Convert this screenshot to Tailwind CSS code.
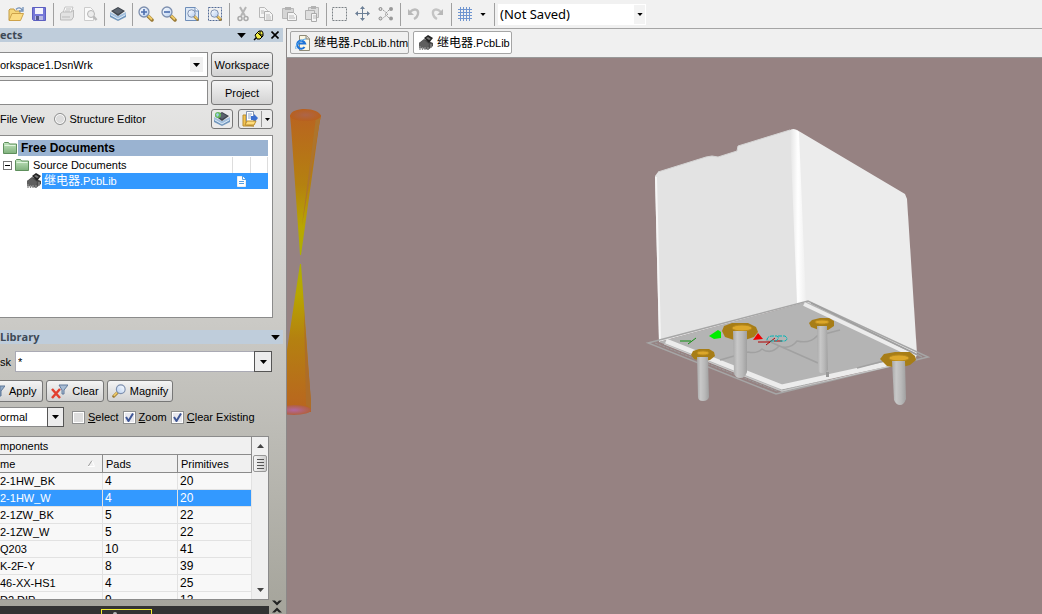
<!DOCTYPE html>
<html lang="en">
<head>
  <meta charset="UTF-8">
  <meta name="viewport" content="width=device-width, initial-scale=1.0">
  <title>PCB Library Editor</title>
  <script src="https://cdn.jsdelivr.net/npm/@tailwindcss/browser@4"></script>
</head>
<body class="h-screen flex flex-col overflow-hidden bg-[#f0f0f0] text-black text-[11px] leading-4 font-['Liberation_Sans','Noto_Sans_CJK_SC',sans-serif]">

  <!-- Shared icons -->
  <svg class="absolute size-0" aria-hidden="true">
    <defs>
      <linearGradient id="folder-fill" x1="0" y1="0" x2="0" y2="1"><stop offset="0" stop-color="#c3e6c0"/><stop offset="1" stop-color="#7fb07c"/></linearGradient>
      <linearGradient id="lens-fill" x1="0" y1="0" x2="1" y2="1"><stop offset="0" stop-color="#ffffff"/><stop offset="1" stop-color="#b4cdf0"/></linearGradient>
    </defs>
    <symbol id="arrow" viewBox="0 0 7 4"><path d="M0 0h7L3.500 4z" fill="currentColor"/></symbol>
    <symbol id="chip" viewBox="0 0 16 16">
      <path d="M1 8l5-4 9 4v3l-5 4-9-4z" fill="#4a4a4a"/>
      <path d="M6 3l4-3 5 3-4 5z" fill="#222"/><path d="M8 3l2-1 3 2-2 1z" fill="#777"/>
      <path d="M1 8l5-3 5 4-1 5-9-1z" fill="#5e5e5e"/>
      <path d="M2 11v4M4.500 12v3M7 12v3M10 12v3M13 9v4" stroke="#8a8a8a" stroke-width="1.300"/>
    </symbol>
    <symbol id="board" viewBox="0 0 16 16">
      <path d="M0 8l8 4 8-4v3l-8 4-8-4z" fill="#7297bd"/><path d="M0 6l8 4 8-4v3l-8 4-8-4z" fill="#a3c0de"/>
      <path d="M1 5l7-4 7 4-7 5z" fill="#3f454d"/><path d="M3 5l5-3 5 3-5 3z" fill="#5b636e"/>
      <path d="M1 9l7 4 7-4" stroke="#dbe9f7" fill="none"/>
    </symbol>
    <symbol id="folder" viewBox="0 0 14 12">
      <path d="M.5 11.500v-10l1-1h4l1 1.500h7v9.500z" fill="url(#folder-fill)" stroke="#5e8f5c"/><path d="M1.500 3.500h11" stroke="#e0f5de"/>
    </symbol>
    <symbol id="lens" viewBox="0 0 16 16">
      <path d="M10 10l4 4" stroke="#9a7a35" stroke-width="3.500" stroke-linecap="round"/><path d="M10 9.500l4 4" stroke="#edc967" stroke-width="2"/>
      <circle cx="6" cy="6" r="5" fill="url(#lens-fill)" stroke="#7d8fae" stroke-width="1.300"/>
    </symbol>
  </svg>

  <!-- Toolbar -->
  <header class="h-7 shrink-0 flex items-center bg-[#f1f1f1] pl-[3px]" role="toolbar">
    <div class="h-[23px] flex items-center gap-[7px] pl-[5px] pr-[6px] border-r border-[#a0a0a0]">
      <button aria-label="Open"><svg class="size-4" viewBox="0 0 16 16"><path d="M1 14V4l1-1h4l1 2h5v3" fill="#f5d77c" stroke="#c39b45"/><path d="M1 14.500L4 7.500h11.500l-3 7z" fill="#fbdc83" stroke="#cda24a"/><path d="M8 3.500c2-2.500 5-2 6 .5M15 1v4h-4" stroke="#7290b8" stroke-width="1.300" fill="none"/></svg></button>
      <button aria-label="Save"><svg class="size-4" viewBox="0 0 16 16"><path d="M1.500 1.500h13v13h-12l-1-1z" fill="#7678d8" stroke="#5c5fc0"/><path d="M4 2h8v6H4z" fill="#f4f4fc"/><path d="M4 10h8v4H4z" fill="#b9bbe4"/><path d="M5 10h3v4H5z" fill="#555a8c"/></svg></button>
    </div>
    <div class="h-[23px] flex items-center gap-[7px] pl-[5px] pr-[6px] border-r border-[#a0a0a0]">
      <button aria-label="Print"><svg class="size-4" viewBox="0 0 16 16"><path d="M4 7l2-6h8l-2 6" fill="#fafafa" stroke="#c4c4c4"/><path d="M1.500 7.500l2-1.500h9l2-2v7l-2 3h-11z" fill="#e2e2e2" stroke="#bbb"/><path d="M3 11h8M7 3h5M6 5h5" stroke="#bbb"/></svg></button>
      <button aria-label="Print preview"><svg class="size-4" viewBox="0 0 16 16"><path d="M2.500 1.500h6l3 3v10h-9z" fill="#fafafa" stroke="#ccc"/><circle cx="9" cy="8" r="3.500" fill="#ececec" stroke="#b5b5b5"/><path d="M11.500 10.500l3 3.500" stroke="#bbb" stroke-width="2.500"/></svg></button>
    </div>
    <div class="h-[23px] flex items-center gap-[7px] pl-[5px] pr-[6px] border-r border-[#a0a0a0]">
      <button aria-label="Board view"><svg class="size-4"><use href="#board"/></svg></button>
    </div>
    <div class="h-[23px] flex items-center gap-[7px] pl-[5px] pr-[6px] border-r border-[#a0a0a0]">
      <button aria-label="Zoom in"><svg class="size-4" viewBox="0 0 16 16"><use href="#lens"/><path d="M6 3v6M3 6h6" stroke="#4d6fae" stroke-width="1.600"/></svg></button>
      <button aria-label="Zoom out"><svg class="size-4" viewBox="0 0 16 16"><use href="#lens"/><path d="M3 6h6" stroke="#4d6fae" stroke-width="1.600"/></svg></button>
      <button aria-label="Fit document"><svg class="size-4" viewBox="0 0 16 16"><path d="M1.500 1.500h10l3 3v10h-13z" fill="#dce8f6" stroke="#6e8db8"/><path d="M11 1v4h4" fill="#fff" stroke="#6e8db8"/><svg x="3" y="3" width="12" height="12"><use href="#lens"/></svg></svg></button>
      <button aria-label="Zoom area"><svg class="size-4" viewBox="0 0 16 16"><path d="M1.500 1.500h13v13h-13z" fill="none" stroke="#526b96" stroke-dasharray="2 1"/><svg x="3" y="3" width="12" height="12"><use href="#lens"/></svg></svg></button>
    </div>
    <div class="h-[23px] flex items-center gap-[7px] pl-[5px] pr-[6px] border-r border-[#a0a0a0]">
      <button aria-label="Cut"><svg class="size-4" viewBox="0 0 16 16"><path d="M5 1l5 9M11 1L6 10" stroke="#b5b5b5" stroke-width="2"/><circle cx="5" cy="12.500" r="2" fill="none" stroke="#aaa" stroke-width="1.500"/><circle cx="11" cy="12.500" r="2" fill="none" stroke="#aaa" stroke-width="1.500"/></svg></button>
      <button aria-label="Copy"><svg class="size-4" viewBox="0 0 16 16"><path d="M1.500 1.500h5l3 3v7h-8z" fill="#f5f5f5" stroke="#b8b8b8"/><path d="M6.500 5.500h5l3 3v6h-8z" fill="#f5f5f5" stroke="#b0b0b0"/><path d="M3 5h3M3 7h3M8 9h4M8 11h5M8 13h5" stroke="#bbb"/></svg></button>
      <button aria-label="Paste"><svg class="size-4" viewBox="0 0 16 16"><path d="M1.500 2.500h11v10h-11z" fill="#d5d5d5" stroke="#b8b8b8"/><path d="M4 1h6v3H4z" fill="#b2b2b2"/><path d="M6.500 6.500h6l3 3v5h-9z" fill="#f5f5f5" stroke="#aaa"/><path d="M8 10h5M8 12h6" stroke="#bbb"/></svg></button>
      <button aria-label="Paste special"><svg class="size-4" viewBox="0 0 16 16"><path d="M4.500 1.500h10v10h-10z" fill="#ddd" stroke="#b8b8b8"/><path d="M7 0h5v3H7z" fill="#b2b2b2"/><path d="M1.500 4.500h9v9h-9z" fill="#dedede" stroke="#b0b0b0"/><path d="M7.500 7.500h5v8h-5z" fill="#f5f5f5" stroke="#aaa"/><path d="M9 10h3M9 12h3" stroke="#bbb"/></svg></button>
    </div>
    <div class="h-[23px] flex items-center gap-[7px] pl-[5px] pr-[6px] border-r border-[#a0a0a0]">
      <button aria-label="Select area"><svg class="size-4" viewBox="0 0 16 16"><path d="M.5 1.500h14v13H.5z" fill="none" stroke="#7c8287" stroke-dasharray="2 1"/></svg></button>
      <button aria-label="Move"><svg class="size-4" viewBox="0 0 16 16"><path d="M7.500 2v12M2 7.500h11" stroke="#6c7f96" fill="none"/><path d="M7.500 0L10 3H5zM7.500 15L10 12H5zM0 7.500L3 5v5zM15 7.500L12 5v5z" fill="#6c7f96"/></svg></button>
      <button aria-label="Deselect"><svg class="size-4" viewBox="0 0 16 16"><path d="M5 4l5 4-5 4M11 4L7 8l4 4" stroke="#999" fill="none" stroke-dasharray="2 1"/><g fill="#ddd" stroke="#888"><circle cx="2.500" cy="3" r="1.500"/><circle cx="2.500" cy="12.500" r="1.500"/></g><circle cx="13" cy="3" r="2" fill="#999"/><circle cx="13" cy="12.500" r="2" fill="#999"/></svg></button>
    </div>
    <div class="h-[23px] flex items-center gap-[7px] pl-[5px] pr-[6px] border-r border-[#a0a0a0]">
      <button aria-label="Undo"><svg class="size-4" viewBox="0 0 16 16"><path d="M4 6c4-4 9-3 8 2-.5 2.500-2 4-4 5" stroke="#bcbcbc" stroke-width="2.300" fill="none"/><path d="M2 3v6h6z" fill="#b8b8b8"/></svg></button>
      <button aria-label="Redo"><svg class="size-4" viewBox="0 0 16 16"><path d="M12 6C8 2 3 3 4 8c.5 2.500 2 4 4 5" stroke="#c4c4c4" stroke-width="2.300" fill="none"/><path d="M14 3v6H8z" fill="#b8b8b8"/></svg></button>
    </div>
    <div class="h-[23px] flex items-center gap-[7px] pl-[5px] pr-[8px] border-r border-[#a0a0a0]">
      <button aria-label="Grid" class="flex items-center gap-[7px]"><svg class="size-4" viewBox="0 0 16 16"><path d="M3.500 1v14M6.500 1v14M9.500 1v14M12.500 1v14M1 3.500h14M1 6.500h14M1 9.500h14M1 12.500h14" stroke="#6f95d0"/></svg><svg class="w-[6px] h-[3px]"><use href="#arrow"/></svg></button>
    </div>
    <div class="relative ml-[3px] w-[148px]">
      <select aria-label="Saved view" class="appearance-none block w-full h-[21px] bg-white pl-[2px] text-[13px] leading-[21px] font-['Noto_Sans',sans-serif]"><option>(Not Saved)</option></select>
      <span class="absolute right-px top-px w-[11px] h-[19px] flex items-center justify-center bg-[#f3f3f3] pointer-events-none"><svg class="w-[6px] h-[3px]"><use href="#arrow"/></svg></span>
    </div>
  </header>

  <main class="flex-1 min-h-0 flex">
    <!-- Docked panels -->
    <aside class="w-[287px] shrink-0 flex flex-col bg-linear-to-b from-[#eeeeee] via-[#cbcac6] to-[#a5a49b] border-r border-[#8c8888] pr-[3px]">
      <div class="h-[14px] shrink-0 flex items-center bg-[#bfcddb] pr-1 gap-[7px]">
        <h2 class="flex-1 font-bold leading-[14px] text-[#3d4956] font-['Open_Sans',sans-serif]">ects</h2>
        <button aria-label="Panel menu"><svg class="w-[9px] h-[5px]"><use href="#arrow"/></svg></button>
        <button aria-label="Pin panel"><svg class="w-[11px] h-[11px]" viewBox="0 0 11 11"><path d="M1 10l3-3" stroke="#000" stroke-width="1.500"/><path d="M2 5l4-4h3l1 2v3L7 9H4z" fill="#f2ee45" stroke="#000"/><path d="M5 3l4 4M7 1v4h3" stroke="#000" fill="none"/></svg></button>
        <button aria-label="Close panel"><svg class="w-[8px] h-[8px]" viewBox="0 0 8 8"><path d="M.5.5l7 7M7.500.5l-7 7" stroke="#000" stroke-width="1.600"/></svg></button>
      </div>

      <div class="mt-[10px] mr-[10px] grid grid-cols-[1fr_62px] gap-x-[3px] gap-y-[3px]">
        <div class="relative">
          <select aria-label="Workspace file" class="appearance-none block w-full h-[25px] bg-white border border-l-0 border-[#8b8b8b]"><option>orkspace1.DsnWrk</option></select>
          <span class="absolute right-[5px] top-[5px] w-[13px] h-[15px] flex items-center justify-center bg-[#f0f0f0] pointer-events-none"><svg class="w-[7px] h-1"><use href="#arrow"/></svg></span>
        </div>
        <button class="h-[25px] rounded-[3px] border border-[#777] bg-linear-to-b from-[#f4f4f4] to-[#d2d2d2]">Workspace</button>
        <input aria-label="Project file" class="min-w-0 h-[25px] bg-white border border-l-0 border-[#8b8b8b]">
        <button class="h-[25px] rounded-[3px] border border-[#777] bg-linear-to-b from-[#f4f4f4] to-[#d2d2d2]">Project</button>
      </div>

      <div class="mt-1 mr-[10px] h-5 flex items-center">
        <span>File View</span>
        <label class="flex-1 ml-[10px] flex items-center gap-[3px]"><input type="radio" name="view" class="appearance-none size-3 rounded-full border border-[#8e8f8f] bg-[#dcdcdc] ring-1 ring-inset ring-white">Structure Editor</label>
        <button aria-label="Show documents" class="w-[22px] h-5 flex items-center justify-center rounded-[3px] border border-[#777] bg-[#ebebeb]"><svg class="size-4" viewBox="0 0 16 16"><use href="#board"/><circle cx="4" cy="4" r="3" fill="#65b95c"/><path d="M2 3l2-1 1 2-2 2z" fill="#9fd0ef"/></svg></button>
        <button aria-label="Open documents" class="ml-[5px] w-[35px] h-5 flex items-center justify-center gap-[3px] rounded-[3px] border border-[#777] bg-[#ebebeb]"><svg class="size-4" viewBox="0 0 16 16"><path d="M1 4h3v10l8 1H1z" fill="#f3c452" stroke="#b98c2e"/><path d="M4.500.5h7v11h-7z" fill="#fff" stroke="#8494b0"/><path d="M6 3h4M6 5h3M6 7h3" stroke="#8ba5cf"/><path d="M9 5h3V3l4 4-4 5V9H9z" fill="#3b6fd0"/><path d="M3 14l2-4h9l-2 4z" fill="#ffdc7a" stroke="#b98c2e"/></svg><span class="w-px h-4 bg-[#999]"></span><svg class="w-[5px] h-[3px]"><use href="#arrow"/></svg></button>
      </div>

      <!-- Document tree -->
      <ul class="mt-[6px] mr-[10px] h-[183px] shrink-0 bg-white border border-l-0 border-[#8b8b8b] pt-1 pr-1">
        <li class="flex items-center pl-[3px] h-4"><svg class="w-[14px] h-3"><use href="#folder"/></svg><b class="ml-px flex-1 bg-[#9ab3d1] pl-[3px] text-[12px] leading-4">Free Documents</b></li>
        <li class="flex items-center pl-[3px] h-4 mt-px">
          <button aria-label="Collapse" class="size-[9px] flex items-center justify-center border border-[#777] bg-white"><span class="w-[5px] h-px bg-black"></span></button>
          <svg class="ml-[3px] w-[14px] h-3"><use href="#folder"/></svg>
          <span class="flex-1 pl-1">Source Documents</span><span class="w-[18px] h-4 border-l border-[#ddd]"></span><span class="w-[18px] h-4 border-x border-[#ddd]"></span>
        </li>
        <li class="flex items-center pl-[26px] h-4">
          <svg class="size-4"><use href="#chip"/></svg>
          <span class="flex-1 flex items-center justify-between h-4 bg-[#3399ff] text-white pl-[2px] pr-[22px]"><span><span class="text-[12px]">继电器</span>.PcbLib</span><svg class="w-[9px] h-[11px]" viewBox="0 0 9 11"><path d="M.5.5h5l3 3v7h-8z" fill="#fff" stroke="#eee"/><path d="M5.500 0v3.500H9M2 5.500h5M2 7.500h5" stroke="#599fe0" fill="none"/></svg></span>
        </li>
      </ul>

      <div class="mt-3 h-[14px] shrink-0 flex items-center justify-between bg-[#bfcddb] pr-[3px]">
        <h2 class="font-bold leading-[14px] text-[#3d4956] font-['Open_Sans',sans-serif]">Library</h2>
        <button aria-label="Library menu"><svg class="w-[9px] h-[5px]"><use href="#arrow"/></svg></button>
      </div>

      <div class="mt-[7px] mr-[11px] flex items-center">
        <label for="mask" class="w-[15px]">sk</label>
        <input id="mask" value="*" class="min-w-0 flex-1 h-[21px] bg-white border border-[#aaaab4] pl-[2px]">
        <button aria-label="Mask history" class="-ml-px w-[18px] h-[21px] flex items-center justify-center border border-[#555] bg-[#ececec]"><svg class="w-[7px] h-1"><use href="#arrow"/></svg></button>
      </div>

      <div class="mt-2 flex gap-[3px]">
        <button class="w-[43px] h-[22px] flex items-center gap-1 rounded-r-[3px] border border-l-0 border-[#777] bg-linear-to-b from-[#f4f4f4] to-[#d2d2d2]"><svg class="w-[5px] h-3" viewBox="0 0 5 12"><path d="M0 1h5L1 6v5H0z" fill="#93acc9" stroke="#5f7899"/></svg>Apply</button>
        <button class="w-[58px] h-[22px] flex items-center justify-center gap-1 rounded-[3px] border border-[#777] bg-linear-to-b from-[#f4f4f4] to-[#d2d2d2]"><svg class="w-[17px] h-[15px]" viewBox="0 0 17 15"><path d="M8 1h9l-4 5v4h-2V6z" fill="#a9bdd5" stroke="#627a9c"/><path d="M1 5l8 9M9 5l-8 9" stroke="#e2402f" stroke-width="2.500"/></svg>Clear</button>
        <button class="w-[66px] h-[22px] flex items-center justify-center gap-1 rounded-[3px] border border-[#777] bg-linear-to-b from-[#f4f4f4] to-[#d2d2d2]"><svg class="w-[14px] h-[14px] -scale-x-100"><use href="#lens"/></svg>Magnify</button>
      </div>

      <div class="mt-[5px] flex items-center">
        <div class="relative w-16 mr-2">
          <select aria-label="Mask mode" class="appearance-none block w-full h-5 bg-white border border-l-0 border-[#8b8b8b]"><option>ormal</option></select>
          <span class="absolute right-0 top-0 w-[17px] h-5 flex items-center justify-center border border-[#555] bg-[#ececec] pointer-events-none"><svg class="w-[7px] h-1"><use href="#arrow"/></svg></span>
        </div>
        <label class="flex items-center gap-[3px] mr-1"><input type="checkbox" class="appearance-none size-[13px] border border-[#8e8f8f] bg-[#dedede] ring-1 ring-inset ring-white"><span><u>S</u>elect</span></label>
        <label class="relative flex items-center gap-[3px] mr-1"><input type="checkbox" checked class="appearance-none size-[13px] border border-[#8e8f8f] bg-[#e8e8ee] ring-1 ring-inset ring-white"><svg class="absolute left-[2px] w-[9px] h-[9px] pointer-events-none" viewBox="0 0 9 9"><path d="M1 4l2.500 4L8 .5" stroke="#3f5796" stroke-width="2" fill="none"/></svg><span><u>Z</u>oom</span></label>
        <label class="relative flex items-center gap-[3px]"><input type="checkbox" checked class="appearance-none size-[13px] border border-[#8e8f8f] bg-[#e8e8ee] ring-1 ring-inset ring-white"><svg class="absolute left-[2px] w-[9px] h-[9px] pointer-events-none" viewBox="0 0 9 9"><path d="M1 4l2.500 4L8 .5" stroke="#3f5796" stroke-width="2" fill="none"/></svg><span><u>C</u>lear Existing</span></label>
      </div>

      <!-- Components list -->
      <div class="mt-[9px] mr-[14px] flex-1 min-h-0 flex overflow-hidden bg-[#f0f0f0] border border-l-0 border-[#8b8b8b]">
        <div class="flex-1 min-w-0 overflow-hidden">
          <table class="w-full table-fixed text-left border-separate border-spacing-0 bg-[#f8f8f8] text-[12px] leading-4">
            <colgroup><col class="w-[103px]"><col class="w-[75px]"><col></colgroup>
            <thead class="bg-[#f0f0f0] text-[11px]">
              <tr><th colspan="3" class="h-[18px] p-0 font-normal border-b border-r border-[#8b8b8b]">mponents</th></tr>
              <tr>
                <th class="h-[18px] p-0 font-normal border-b border-r border-[#8b8b8b]"><span class="flex items-center justify-between pr-[7px]">me<svg class="w-[7px] h-[7px]" viewBox="0 0 7 7"><path d="M0 6.500L4 .5" stroke="#999"/><path d="M4 .5l2.500 6H0" stroke="#fff" fill="none"/></svg></span></th>
                <th class="p-0 pl-[3px] font-normal border-b border-r border-[#8b8b8b]">Pads</th>
                <th class="p-0 pl-[3px] font-normal border-b border-r border-[#8b8b8b]">Primitives</th>
              </tr>
            </thead>
            <tbody class="[&_td]:h-[17px] [&_td]:p-0 [&_td]:border-b [&_td]:border-r [&_td]:border-[#e2e2e2] [&_td+td]:pl-[2px] [&_td:first-child]:text-[11px]">
              <tr><td>2-1HW_BK</td><td>4</td><td>20</td></tr>
              <tr class="bg-[#3399ff] text-white"><td>2-1HW_W</td><td>4</td><td>20</td></tr>
              <tr><td>2-1ZW_BK</td><td>5</td><td>22</td></tr>
              <tr><td>2-1ZW_W</td><td>5</td><td>22</td></tr>
              <tr><td>Q203</td><td>10</td><td>41</td></tr>
              <tr><td>K-2F-Y</td><td>8</td><td>39</td></tr>
              <tr><td>46-XX-HS1</td><td>4</td><td>25</td></tr>
              <tr><td>D2.DIP</td><td>9</td><td>12</td></tr>
            </tbody>
          </table>
        </div>
        <div class="w-4 shrink-0 flex flex-col items-center py-[7px]">
          <svg class="w-[7px] h-1 rotate-180 text-[#444]"><use href="#arrow"/></svg>
          <div class="mt-[7px] w-[14px] h-[17px] flex flex-col items-center justify-center gap-[2px] rounded-[2px] border border-[#979797] bg-linear-to-r from-[#f5f5f5] to-[#cfcfcf]">
            <span class="w-[7px] h-px bg-[#555]"></span><span class="w-[7px] h-px bg-[#555]"></span><span class="w-[7px] h-px bg-[#555]"></span><span class="w-[7px] h-px bg-[#555]"></span>
          </div>
          <svg class="mt-auto w-[7px] h-1 text-[#444]"><use href="#arrow"/></svg>
        </div>
      </div>
      <div class="h-[14px] shrink-0 flex items-end">
        <div class="w-[269px] h-2 flex bg-[#333]"><div class="ml-[101px] mt-[3px] w-[51px] border border-b-0 border-[#f4ee30] flex justify-center pr-6"><span class="w-1 h-1 mt-[2px] rounded-t-full bg-[#bbb]"></span></div></div>
        <button aria-label="Collapse section" class="self-start ml-[3px]"><svg class="w-[10px] h-[13px]" viewBox="0 0 10 13"><path d="M0 .5h3l2 2 2-2h3l-5 5zM0 12.500h3l2-2 2 2h3l-5-5z" fill="#222"/></svg></button>
      </div>
    </aside>

    <section class="flex-1 min-w-0 flex flex-col border-t border-[#a5a5a5]">
      <!-- Document tabs -->
      <nav class="h-[29px] shrink-0 flex gap-1 pl-[3px] pt-[2px] border-b border-[#999]">
        <a href="#" class="h-[23px] w-[119px] flex items-center gap-[3px] pl-1 border border-[#a5a5a5] rounded-[2px] whitespace-nowrap"><svg class="size-4 shrink-0" viewBox="0 0 16 16"><path d="M4.500.5h7l3 3v12h-10z" fill="#fbf7e4" stroke="#8e8a78"/><path d="M11 .5v3.500h4" fill="#ddd" stroke="#8e8a78"/><path d="M9.500 12A4 4 0 1 1 10 8.500H3" fill="none" stroke="#1e74d8" stroke-width="2.200"/><path d="M1 14C-1 11 6 4 11 4" stroke="#5aaef0" fill="none"/></svg><span><span class="text-[12px]">继电器</span>.PcbLib.htm</span></a>
        <a href="#" aria-current="page" class="h-[23px] w-[99px] flex items-center gap-[3px] pl-1 bg-white border border-[#a5a5a5] rounded-[2px] whitespace-nowrap"><svg class="size-4 shrink-0"><use href="#chip"/></svg><span><span class="text-[12px]">继电器</span>.PcbLib</span></a>
      </nav>

      <!-- 3D view of the relay -->
      <div class="flex-1 min-h-0 bg-[#968282] overflow-hidden">
        <svg class="block w-full h-full" viewBox="287 58 755 556" preserveAspectRatio="xMinYMin slice" role="img" aria-label="3D relay model">
          <defs>
            <linearGradient id="cone-top" x1="0" y1="0" x2="0" y2="1"><stop offset="0" stop-color="#b96420"/><stop offset=".5" stop-color="#b48110"/><stop offset=".8" stop-color="#b8a600"/><stop offset="1" stop-color="#aeb000"/></linearGradient>
            <linearGradient id="cone-bottom" x1="0" y1="1" x2="0" y2="0"><stop offset="0" stop-color="#b96420"/><stop offset=".5" stop-color="#b48110"/><stop offset=".8" stop-color="#b8a600"/><stop offset="1" stop-color="#aeb000"/></linearGradient>
            <radialGradient id="cap-top"><stop offset="0" stop-color="#ad6549"/><stop offset="1" stop-color="#b8601e"/></radialGradient>
            <radialGradient id="cap-bottom"><stop offset="0" stop-color="#b168a0"/><stop offset="1" stop-color="#b2603c"/></radialGradient>
            <linearGradient id="edge" x1="0" x2="1"><stop offset="0" stop-color="#e4e4e4"/><stop offset=".5" stop-color="#fff"/><stop offset="1" stop-color="#eee"/></linearGradient>
            <linearGradient id="pin" x1="0" x2="1"><stop offset="0" stop-color="#a9a9a9"/><stop offset=".3" stop-color="#c8c8c8"/><stop offset=".65" stop-color="#b9b9b9"/><stop offset="1" stop-color="#a0a0a0"/></linearGradient>
          </defs>
          <path d="M290 115L291 126L300 255H301L319 126L321 115z" fill="url(#cone-top)"/>
          <path d="M316 117L302 225L319 126L321 115z" fill="#ad742c"/>
          <path d="M290 116c1-5 7-7 15-7s15 3 16 7c-1 3-7 5-15 5s-16-2-16-5z" fill="url(#cap-top)"/>
          <path d="M300 264h1L309 375L311 405V412H277L287 350z" fill="url(#cone-bottom)"/>
          <path d="M304 310L306 405L311 409V400L308 365z" fill="#ad6d28"/>
          <ellipse cx="294" cy="410" rx="17" ry="5" fill="url(#cap-bottom)"/>

          <!-- Housing -->
          <path d="M655 176L658 172L706 157L712 156L718 157L737 151L738 146L790 130L797 131L804 303L659 342z" fill="#e3e3e3"/>
          <path d="M656 177L660 341" stroke="#f6f6f6" stroke-width="2"/>
          <path d="M658 172L706 157L712 156L718 157L737 151L738 146L790 130" stroke="#d5d5d5" fill="none"/>
          <path d="M797 130L905 194L907 199L917 354L805 303z" fill="#ececec"/>
          <path d="M790 130Q795 127 799 132L806 303H797z" fill="url(#edge)"/>

          <!-- Underside -->
          <path d="M659 342L807 302L919 355L782 392z" fill="#b4b4b4"/>
          <path d="M648 343L808 301L928 357L776 394z" fill="none" stroke="#a6a6a6" stroke-width="1.500"/>
          <path d="M655 343L777 391L918 358" fill="none" stroke="#9b9b9b" stroke-dasharray="3 1"/>
          <path d="M666 341L782 387L905 360" fill="none" stroke="#ececec" stroke-width="5"/>
          <path d="M664 344L782 391L896 365" fill="none" stroke="#c9c9c9"/>
          <path d="M804 304L916 357" stroke="#ececec" stroke-width="4"/>
          <path d="M811 303L922 357" stroke="#9e9e9e" stroke-width="1.500"/>
          <path d="M720 360L748 352Q757 354 762 349Q771 355 779 346Q790 350 797 341Q810 344 817 336L840 330M766 340L818 363M857 368L884 361" stroke="#a1a1a1" stroke-width="1.500" fill="none"/>

          <!-- Origin markers -->
          <path d="M709 336L718 330L721 332V338L714 339z" fill="#00ee00"/>
          <path d="M680 341H691M688 344L696 338" stroke="#109010"/>
          <path d="M753 340L758 333L763 339z" fill="#ee0000"/>
          <path d="M758 342H770M774 341H782M766 345L775 338" stroke="#b00000"/>
          <path d="M767 340q0-4 6-4h4q3 2-1 5h-6M778 336h7q4 3 0 5h-5" stroke="#00b5b5" fill="none" stroke-dasharray="4 1"/>

          <!-- Pads and pins -->
          <g fill="#a77d16">
            <path d="M691 355l2-4 6-2h10l5 3 1 4-5 4-8 1-8-2z"/>
            <path d="M722 331l2-5 8-3h16l8 4 2 5-4 5-9 3h-11l-9-3z"/>
            <path d="M809 323l3-3 8-2h9l5 3v5l-6 4h-9l-8-3z"/>
            <path d="M880 359l4-5 11-2h15l5 4 1 4-6 5-12 3-11-2z"/>
          </g>
          <g fill="#dca72a" stroke="#b98a1c">
            <ellipse cx="703" cy="353" rx="6" ry="2"/><ellipse cx="742" cy="328" rx="10" ry="3"/><ellipse cx="822" cy="322" rx="7" ry="2"/><ellipse cx="899" cy="358" rx="10" ry="3"/>
          </g>
          <path d="M697 357h11l1 40q-1 4-6 4t-5-4z" fill="url(#pin)"/>
          <path d="M733 331h14v41q-2 6-7 6t-6-5z" fill="url(#pin)"/>
          <path d="M817 326h10l1 44q-2 3-6 3t-4-4z" fill="url(#pin)"/>
          <path d="M892 361h13l1 38q-2 6-6 6t-6-5z" fill="url(#pin)"/>
          <path d="M826 372h3v5h-3z" fill="#999"/>
        </svg>
      </div>
    </section>
  </main>
</body>
</html>
